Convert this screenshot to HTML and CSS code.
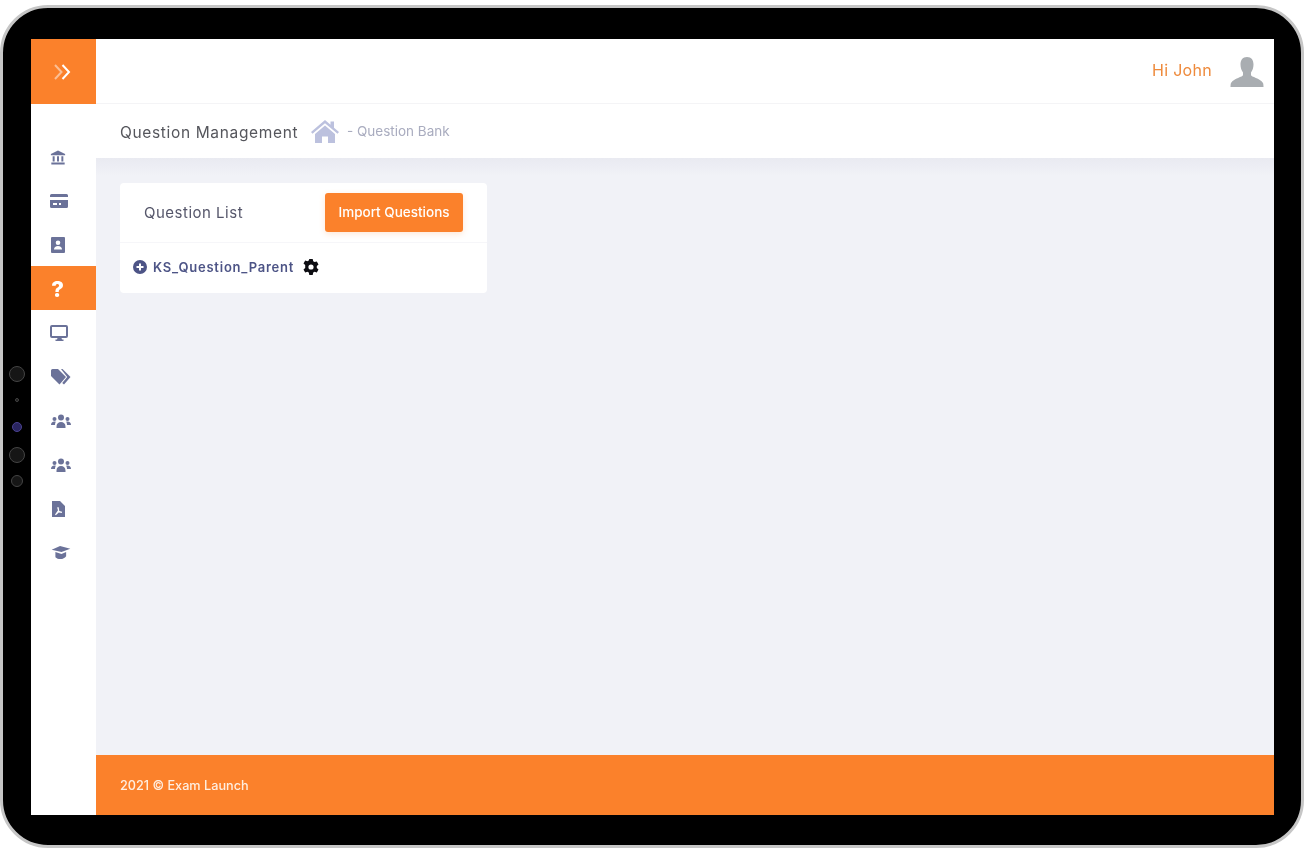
FILE: index.html
```html
<!DOCTYPE html>
<html lang="en">
<head>
    <meta charset="UTF-8">
    <meta name="viewport" content="width=device-width, initial-scale=1.0">
    <title>Question Bank</title>
    <link rel="stylesheet" href="styles.css">
</head>
<body>
    <div class="tablet">
        <!-- camera dots on the bezel -->
        <span class="dot dot1"></span>
        <span class="dot dot2"></span>
        <span class="dot dot3"></span>
        <span class="dot dot4"></span>
        <span class="dot dot5"></span>

        <div class="screen">
            <div class="side">
                <div class="toggle">
                    <svg width="20" height="18" viewBox="0 0 20 18" fill="none" stroke-width="2">
                        <path d="M2 2l6.500 7-6.500 7" stroke="#fbbf94"/>
                        <path d="M9.500 2l6.500 7-6.500 7" stroke="#fff"/>
                    </svg>
                </div>
                <div class="menu">
                    <div class="item">
                        <svg class="ico i-left" width="16" height="15" viewBox="0 0 18 16"><path d="M9 0L17 4v1.500H1V4zM3 6.500h2.200v6H3zM7.900 6.500h2.200v6H7.900zM12.800 6.500H15v6h-2.200zM1.500 13.500h15V16h-15z"/></svg>
                    </div>
                    <div class="item">
                        <svg class="ico" width="18" height="14" viewBox="0 0 18 14"><path d="M1.500 0h15A1.500 1.500 0 0 1 18 1.500V3H0V1.500A1.500 1.500 0 0 1 1.500 0zM0 6h18v6.500a1.500 1.500 0 0 1-1.500 1.500h-15A1.500 1.500 0 0 1 0 12.500zM3 9v2h4V9zM9 9v2h2V9z" fill-rule="evenodd"/></svg>
                    </div>
                    <div class="item">
                        <svg class="ico i-left" width="14" height="16" viewBox="0 0 14 16"><path d="M1 0h12a1 1 0 0 1 1 1v14a1 1 0 0 1-1 1H1a1 1 0 0 1-1-1V1a1 1 0 0 1 1-1zM7 3.500a2.300 2.300 0 1 0 0 4.600 2.300 2.300 0 0 0 0-4.600zM3 12.500h8c0-2.200-1.700-3.500-4-3.500s-4 1.300-4 3.500z" fill-rule="evenodd"/></svg>
                    </div>
                    <div class="item active">
                        <span class="qmark">?</span>
                    </div>
                    <div class="item">
                        <svg class="ico" width="18" height="16" viewBox="0 0 18 16"><path d="M2 0h14a2 2 0 0 1 2 2v9a2 2 0 0 1-2 2h-4.500l.5 1.500h1.500V16h-8v-1.500H7l.5-1.500H2a2 2 0 0 1-2-2V2a2 2 0 0 1 2-2zM2 2v9h14V2z" fill-rule="evenodd"/></svg>
                    </div>
                    <div class="item">
                        <svg class="ico i-right" width="20" height="16" viewBox="0 0 20 16"><path d="M0 1.500A1.500 1.500 0 0 1 1.500 0H7l8 8-6.500 7.500L0 7z"/><path d="M10 0h1.500l8 8-6.500 7.500-1.800-1.500 5-6z"/></svg>
                    </div>
                    <div class="item">
                        <svg class="ico i-right" width="20" height="15" viewBox="0 0 20 15"><circle cx="10" cy="3.500" r="3"/><circle cx="3.500" cy="5" r="2"/><circle cx="16.500" cy="5" r="2"/><path d="M5.500 12.500c0-3 2-4.500 4.500-4.500s4.500 1.500 4.500 4.500V14h-9zM0 11c0-2 1.300-3.500 3.500-3.500.5 0 1 .1 1.300.3-.6 1-.8 2-.8 3.200H0zM20 11c0-2-1.300-3.500-3.500-3.500-.5 0-1 .1-1.300.3.600 1 .8 2 .8 3.200H20z"/></svg>
                    </div>
                    <div class="item">
                        <svg class="ico i-right" width="20" height="15" viewBox="0 0 20 15"><circle cx="10" cy="3.500" r="3"/><circle cx="3.500" cy="5" r="2"/><circle cx="16.500" cy="5" r="2"/><path d="M5.500 12.500c0-3 2-4.500 4.500-4.500s4.500 1.500 4.500 4.500V14h-9zM0 11c0-2 1.300-3.500 3.500-3.500.5 0 1 .1 1.300.3-.6 1-.8 2-.8 3.200H0zM20 11c0-2-1.300-3.500-3.500-3.500-.5 0-1 .1-1.300.3.600 1 .8 2 .8 3.200H20z"/></svg>
                    </div>
                    <div class="item">
                        <svg class="ico i-left" width="13" height="16" viewBox="0 0 13 16"><path d="M0 0h8l5 5v11H0zM6 6c-.8 0-1 1 0 3.200L3 13.500l.8.800 3-2.800 3 .5.300-1.200-2.800-.8C6.800 8 7 6 6 6z" fill-rule="evenodd"/></svg>
                    </div>
                    <div class="item">
                        <svg class="ico i-right" width="20" height="14" viewBox="0 0 20 15"><path d="M9 0l11 3-9.500 3.500L0 4zM4 6.500l6.500 2 5-2V11c-1.500 2-3.500 3-6 3s-4-.7-5.500-2z"/></svg>
                    </div>
                </div>
            </div>

            <div class="main">
                <div class="topbar">
                    <span class="hi">Hi John</span>
                    <svg class="avatar" width="34" height="32" viewBox="0 0 34 32"><path d="M17 1c4.500 0 6.500 3 6.500 7.500 0 3-1 6-2.500 8v2.500c0 2 9 3 12 8 .5 1 .5 4 .5 4H.5s0-3 .5-4c3-5 12-6 12-8v-2.500c-1.500-2-2.500-5-2.500-8C10.500 4 12.500 1 17 1z"/></svg>
                </div>
                <div class="crumb">
                    <span class="crumb-title">Question Management</span>
                    <svg class="home" width="28" height="24" viewBox="0 0 28 24"><path d="M14 1L0 13l1.500 1.800L14 4.200l12.500 10.600L28 13l-5-4.300V2.500h-3.500v3.200z"/><path d="M14 6.500L4 15v9h7v-6.500h6V24h7v-9z"/></svg>
                    <span class="crumb-sub">- Question Bank</span>
                </div>
                <div class="content">
                    <div class="card">
                        <div class="card-head">
                            <span class="card-title">Question List</span>
                            <button type="button" class="btn">Import Questions</button>
                        </div>
                        <div class="tree">
                            <svg width="14" height="14" viewBox="0 0 14 14"><path class="plus" fill-rule="evenodd" d="M7 0a7 7 0 1 1 0 14A7 7 0 0 1 7 0zM6 3.500v2.500H3.500v2H6v2.500h2V8h2.500V6H8V3.500z"/></svg>
                            <span class="tree-name">KS_Question_Parent</span>
                            <svg class="gear" width="16" height="16" viewBox="0 0 16 16"><path fill-rule="evenodd" d="M6.300 0h3.400l.5 2.300 1.400.8 2.200-.7 1.700 3-1.700 1.600v1.900l1.700 1.600-1.700 3-2.200-.7-1.400.8-.5 2.400H6.300l-.5-2.400-1.400-.8-2.200.7-1.700-3 1.700-1.600V6.100L.5 4.500l1.700-3 2.200.7 1.400-.8zM8 5.400a2.600 2.600 0 1 0 0 5.200 2.600 2.600 0 0 0 0-5.200z"/></svg>
                        </div>
                    </div>
                </div>
                <div class="footer">2021 © Exam Launch</div>
            </div>
        </div>
    </div>
</body>
</html>
```

FILE: styles.css
```css
html, body {
    margin: 0;
    background-color: white;
}
body * {
    font-family: "Inter", "Liberation Sans", sans-serif;
    box-sizing: border-box;
}

div.tablet {
    position: relative;
    width: 1304px;
    height: 843px;
    margin-top: 5px;
    padding: 31px 27px 30px 28px;
    background-color: black;
    border: 3px solid #c6c6c6;
    border-radius: 48px;
}

.dot {
    position: absolute;
    border-radius: 50%;
    background-color: #161616;
    border: 1px solid #444;
}
.dot1 { left: 6px; top: 358px; width: 16px; height: 16px; }
.dot2 { left: 12px; top: 390px; width: 4px; height: 4px; }
.dot3 { left: 9px; top: 414px; width: 10px; height: 10px; background-color: #2a2560; border-color: #4a4290; }
.dot4 { left: 6px; top: 439px; width: 16px; height: 16px; }
.dot5 { left: 8px; top: 467px; width: 12px; height: 12px; }

div.screen {
    display: flex;
    height: 776px;
    background-color: white;
    filter: blur(0.5px);
}

/* left menu */
div.side {
    width: 65px;
    flex-shrink: 0;
    background-color: white;
}
div.toggle {
    height: 65px;
    background-color: #fb812b;
    display: flex;
    align-items: center;
    justify-content: center;
    padding-right: 2px;
}
div.menu {
    padding-top: 30px;
}
div.item {
    height: 44px;
    display: flex;
    align-items: center;
    justify-content: center;
    padding: 2px 9px 0 0;
}
div.item.active {
    background-color: #fb812b;
    padding-right: 12px;
}
.ico {
    fill: #6b7299;
}
.i-left {
    margin-right: 2px;
}
.i-right {
    margin-left: 4px;
}
span.qmark {
    color: white;
    font-size: 22px;
    font-weight: 800;
}

/* right side */
div.main {
    flex: 1;
    display: flex;
    flex-direction: column;
}
div.topbar {
    height: 65px;
    display: flex;
    align-items: center;
    justify-content: flex-end;
    padding-right: 10px;
    border-bottom: 1px solid #f4f4f6;
}
span.hi {
    color: #ee8a3c;
    font-size: 16px;
    margin: 0 18px 2px 0;
    letter-spacing: 0.3px;
}
.avatar {
    fill: #a9adb1;
    margin-top: 2px;
}
div.crumb {
    height: 54px;
    display: flex;
    align-items: center;
    padding-left: 24px;
}
span.crumb-title {
    color: #55565c;
    font-size: 15.500px;
    width: 191px;
    letter-spacing: 0.65px;
    padding-top: 2px;
}
.home {
    fill: #bcc1de;
    margin: 0 8px 1px 0;
}
span.crumb-sub {
    color: #a9acbf;
    font-size: 13.500px;
}
div.content {
    flex: 1;
    padding: 25px 24px;
    background: linear-gradient(#e9eaf1, #f1f2f7 18px);
}
div.card {
    width: 367px;
    height: 110px;
    background-color: white;
    border-radius: 4px;
}
div.card-head {
    height: 60px;
    display: flex;
    align-items: center;
    padding-left: 24px;
    border-bottom: 1px solid #f6f6f9;
}
span.card-title {
    width: 181px;
    color: #55566a;
    font-size: 15px;
    letter-spacing: 0.5px;
}
button.btn {
    width: 138px;
    height: 39px;
    margin-top: -1px;
    padding: 0;
    border: 0;
    border-radius: 3px;
    background-color: #fb812b;
    color: white;
    font-size: 13.500px;
    font-weight: 500;
    box-shadow: 0 2px 6px rgba(251, 129, 43, 0.2);
}
div.tree {
    display: flex;
    align-items: center;
    padding: 0 0 2px 13px;
    height: 49px;
}
.plus {
    fill: #4d5486;
}
span.tree-name {
    margin-left: 6px;
    color: #4d5486;
    font-size: 13px;
    font-weight: 600;
    letter-spacing: 0.78px;
}
.gear {
    margin-left: 9px;
    fill: #0d0d12;
}
div.footer {
    height: 60px;
    display: flex;
    align-items: center;
    padding-left: 24px;
    background-color: #fb812b;
    color: #ffeee0;
    font-size: 12.700px;
    font-weight: 500;
}
```
